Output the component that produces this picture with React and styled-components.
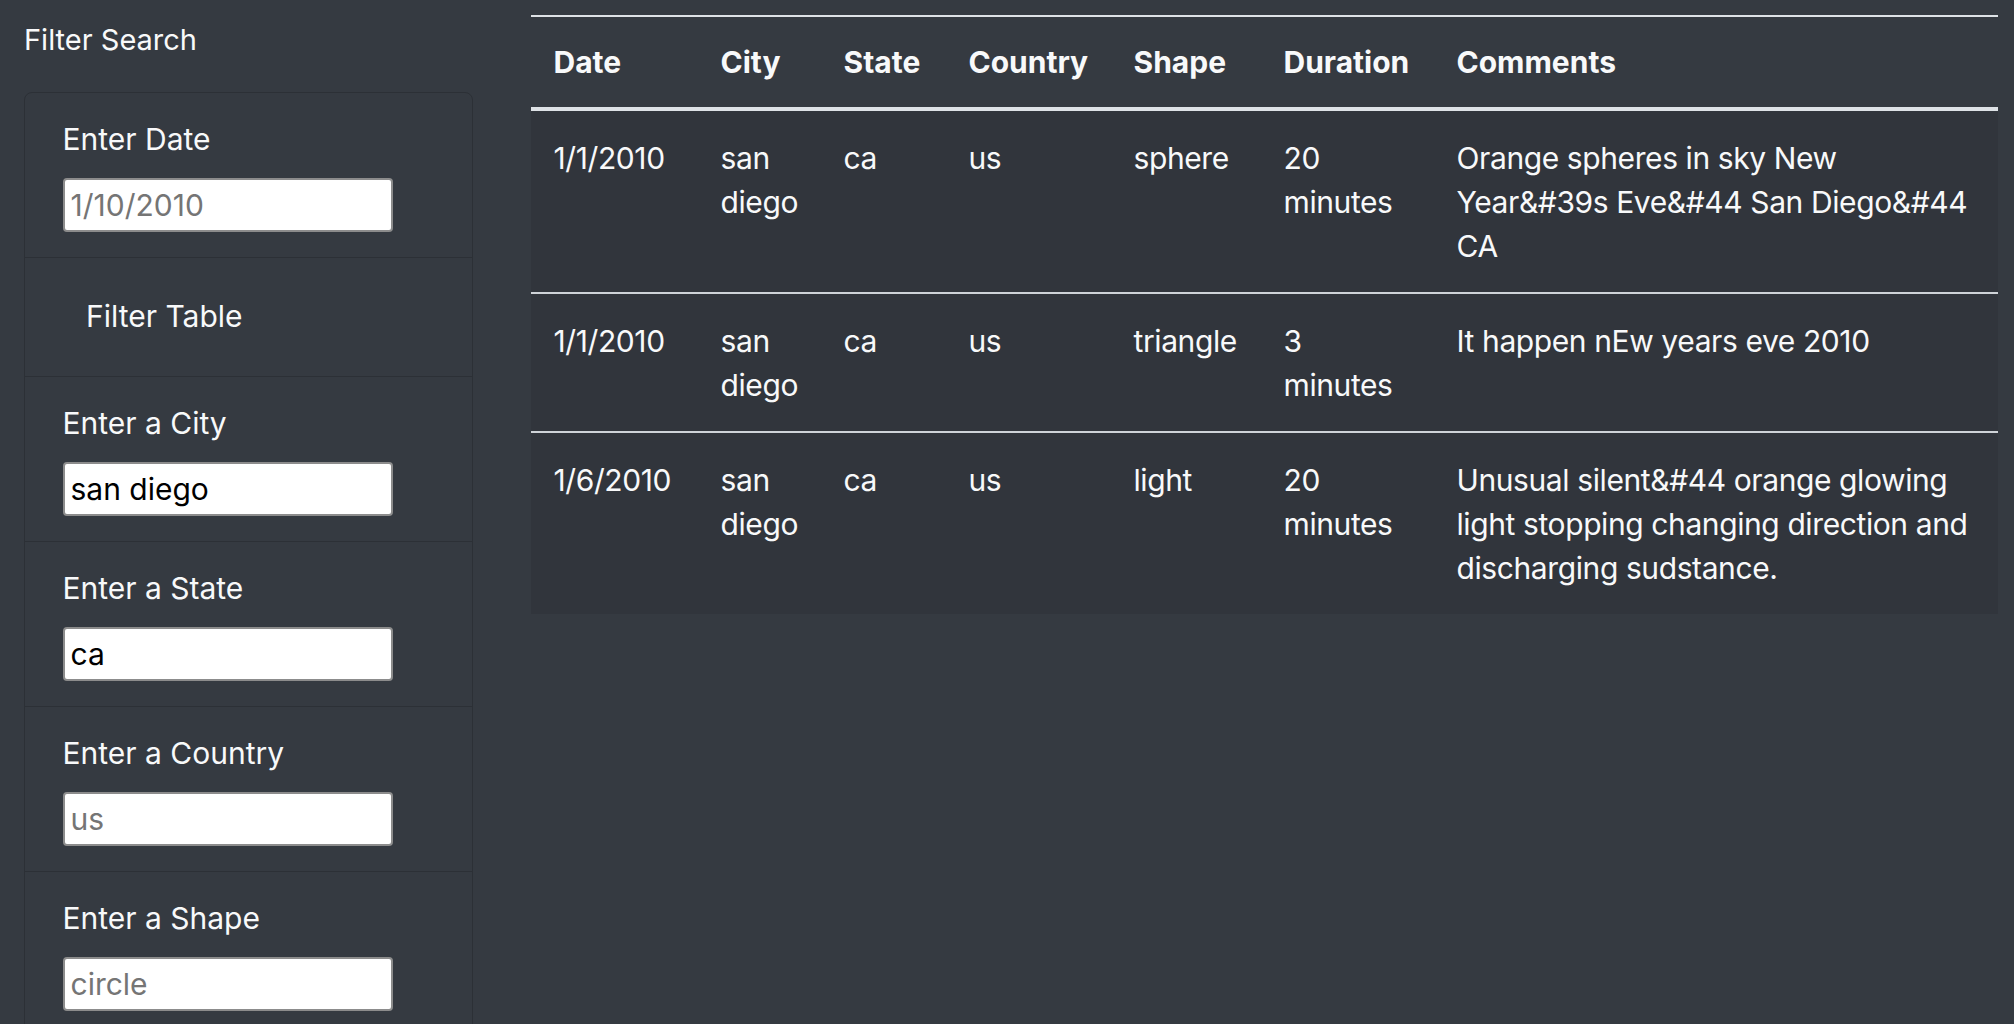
import React from "react";
import styled, { createGlobalStyle } from "styled-components";

const GlobalStyle = createGlobalStyle`
  html, body {
    margin: 0;
    padding: 0;
    background: #353a41;
    min-height: 100%;
  }
  body {
    font-family: Inter, "Liberation Sans", sans-serif;
    color: #f8f9fa;
  }
  * {
    box-sizing: border-box;
  }
`;

const Page = styled.div`
  display: grid;
  grid-template-columns: 449px 1fr;
  column-gap: 58px;
  padding: 15px 16px 0 24px;
  min-height: 1024px;
  overflow: hidden;
`;

const Sidebar = styled.aside`
  display: flex;
  flex-direction: column;
`;

const SideTitle = styled.div`
  font-size: 29px;
  line-height: 45px;
  margin: 2px 0 30px;
`;

const Card = styled.div`
  border: 1px solid #2c3036;
  border-radius: 8px;
  display: flex;
  flex-direction: column;
`;

const Item = styled.div`
  display: flex;
  flex-direction: column;
  align-items: flex-start;
  padding: 24px 37.5px ${(p) => (p.$button ? "24px" : "25px")};
  border-top: ${(p) => (p.$first ? "none" : "1px solid #2c3036")};
`;

const Label = styled.label`
  font-size: 30px;
  line-height: 45px;
  margin-bottom: 16px;
`;

const Input = styled.input`
  width: 330px;
  height: 54px;
  padding: 0 6px;
  font-family: Inter, "Liberation Sans", sans-serif;
  font-size: 30px;
  color: #000;
  background: #fff;
  border: 2px solid #8c8c8c;
  border-radius: 4px;
  outline: none;
  &::placeholder {
    color: #757575;
  }
`;

const FilterButton = styled.button`
  font-family: Inter, "Liberation Sans", sans-serif;
  font-size: 30px;
  line-height: 45px;
  padding: 11.25px 22.5px;
  border: 1px solid transparent;
  background: transparent;
  color: #f8f9fa;
  cursor: pointer;
`;

const Main = styled.main`
  min-width: 0;
`;

const Table = styled.table`
  width: 100%;
  table-layout: fixed;
  border-collapse: separate;
  border-spacing: 0;
  font-size: 30px;
  line-height: 44px;
`;

const Th = styled.th`
  width: ${(p) => (p.$w ? `${p.$w}px` : "auto")};
  text-align: left;
  font-weight: 700;
  padding: 23px 22.5px;
  border-top: 2px solid #dee2e6;
  border-bottom: 4px solid #dee2e6;
  vertical-align: bottom;
`;

const Td = styled.td`
  text-align: left;
  vertical-align: top;
  padding: 24.5px 22.5px;
  letter-spacing: -0.4px;
  background: #31353c;
  border-bottom: ${(p) => (p.$last ? "none" : "2px solid #cfd3d8")};
`;

const columns = [
  { name: "Date", w: 167 },
  { name: "City", w: 123 },
  { name: "State", w: 125 },
  { name: "Country", w: 165 },
  { name: "Shape", w: 150 },
  { name: "Duration", w: 173 },
  { name: "Comments" },
];

const sightings = [
  {
    date: "1/1/2010",
    city: "san diego",
    state: "ca",
    country: "us",
    shape: "sphere",
    duration: "20 minutes",
    comments: "Orange spheres in sky New Year&#39s Eve&#44 San Diego&#44 CA",
  },
  {
    date: "1/1/2010",
    city: "san diego",
    state: "ca",
    country: "us",
    shape: "triangle",
    duration: "3 minutes",
    comments: "It happen nEw years eve 2010",
  },
  {
    date: "1/6/2010",
    city: "san diego",
    state: "ca",
    country: "us",
    shape: "light",
    duration: "20 minutes",
    comments:
      "Unusual silent&#44 orange glowing light stopping changing direction and discharging sudstance.",
  },
];

const filters = [
  { id: "city", label: "Enter a City", value: "san diego" },
  { id: "state", label: "Enter a State", value: "ca" },
  { id: "country", label: "Enter a Country", placeholder: "us" },
  { id: "shape", label: "Enter a Shape", placeholder: "circle" },
];

const App = () => {
  return (
    <>
      <GlobalStyle />
      <Page>
        <Sidebar>
          <SideTitle>Filter Search</SideTitle>
          <Card>
            <Item $first>
              <Label htmlFor="datetime">Enter Date</Label>
              <Input id="datetime" type="text" placeholder="1/10/2010" />
            </Item>
            <Item $button>
              <FilterButton type="button">Filter Table</FilterButton>
            </Item>
            {filters.map((f) => (
              <Item key={f.id}>
                <Label htmlFor={f.id}>{f.label}</Label>
                <Input
                  id={f.id}
                  type="text"
                  defaultValue={f.value}
                  placeholder={f.placeholder}
                />
              </Item>
            ))}
          </Card>
        </Sidebar>
        <Main>
          <Table>
            <thead>
              <tr>
                {columns.map((c) => (
                  <Th key={c.name} $w={c.w}>
                    {c.name}
                  </Th>
                ))}
              </tr>
            </thead>
            <tbody>
              {sightings.map((s, i) => {
                const last = i === sightings.length - 1;
                return (
                  <tr key={i}>
                    <Td $last={last}>{s.date}</Td>
                    <Td $last={last}>{s.city}</Td>
                    <Td $last={last}>{s.state}</Td>
                    <Td $last={last}>{s.country}</Td>
                    <Td $last={last}>{s.shape}</Td>
                    <Td $last={last}>{s.duration}</Td>
                    <Td $last={last}>{s.comments}</Td>
                  </tr>
                );
              })}
            </tbody>
          </Table>
        </Main>
      </Page>
    </>
  );
};

export default App;
